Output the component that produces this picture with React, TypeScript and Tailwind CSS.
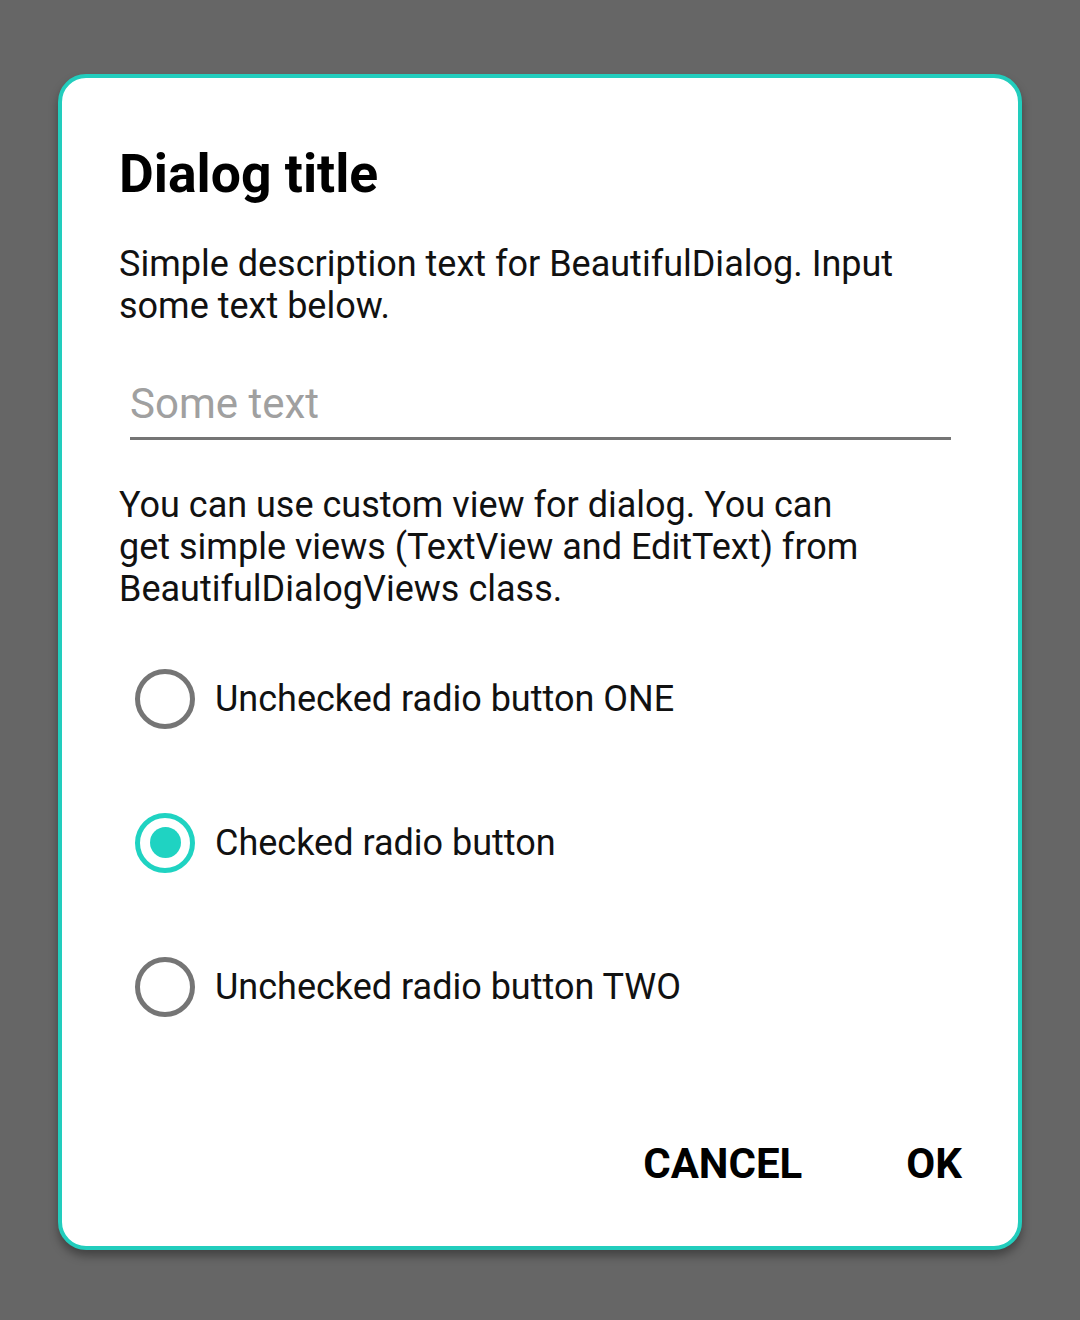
import React from "react";

function Radio({ checked, label }: { checked?: boolean; label: string }) {
  return (
    <div className="flex items-center h-[144px]">
      <div className="w-[96px] flex items-center justify-center pr-[4px]">
        {checked ? (
          <div className="w-[60px] h-[60px] rounded-full border-[5px] border-[#1fd3c2] flex items-center justify-center">
            <div className="w-[31px] h-[31px] rounded-full bg-[#1fd3c2]" />
          </div>
        ) : (
          <div className="w-[60px] h-[60px] rounded-full border-[5px] border-[#757575]" />
        )}
      </div>
      <span className="text-[36px] text-[#111] leading-none">{label}</span>
    </div>
  );
}

export default function App() {
  return (
    <div
      className="w-[1080px] h-[1320px] bg-[#666666] pt-[74px] pl-[58px]"
      style={{ fontFamily: "Roboto, 'Noto Sans', sans-serif" }}
    >
      <div className="w-[964px] h-[1176px] bg-white rounded-[28px] border-[4px] border-[#22cdbd] shadow-[0_6px_10px_rgba(0,0,0,0.35)] flex flex-col pl-[57px] pr-[56px]">
        <h1 className="text-[53.5px] font-bold text-black leading-none mt-[69px]">Dialog title</h1>
        <p className="text-[36px] leading-[42px] text-[#111] mt-[42px] w-[790px]">
          Simple description text for BeautifulDialog. Input some text below.
        </p>
        <div className="ml-[11px] mr-[11px] mt-[56px] border-b-[3px] border-[#757575] pb-[12px]">
          <span className="text-[42px] leading-none text-[#a0a0a0]">Some text</span>
        </div>
        <p className="text-[36px] leading-[42px] text-[#111] mt-[44px] w-[760px]">
          You can use custom view for dialog. You can get simple views (TextView and EditText) from BeautifulDialogViews class.
        </p>
        <div className="flex flex-col mt-[17px]">
          <Radio label="Unchecked radio button ONE" />
          <Radio checked label="Checked radio button" />
          <Radio label="Unchecked radio button TWO" />
        </div>
        <div className="flex justify-end items-center mt-[84px] gap-[104px]">
          <span className="text-[42px] font-bold text-black leading-none">CANCEL</span>
          <span className="text-[42px] font-bold text-black leading-none">OK</span>
        </div>
      </div>
    </div>
  );
}
